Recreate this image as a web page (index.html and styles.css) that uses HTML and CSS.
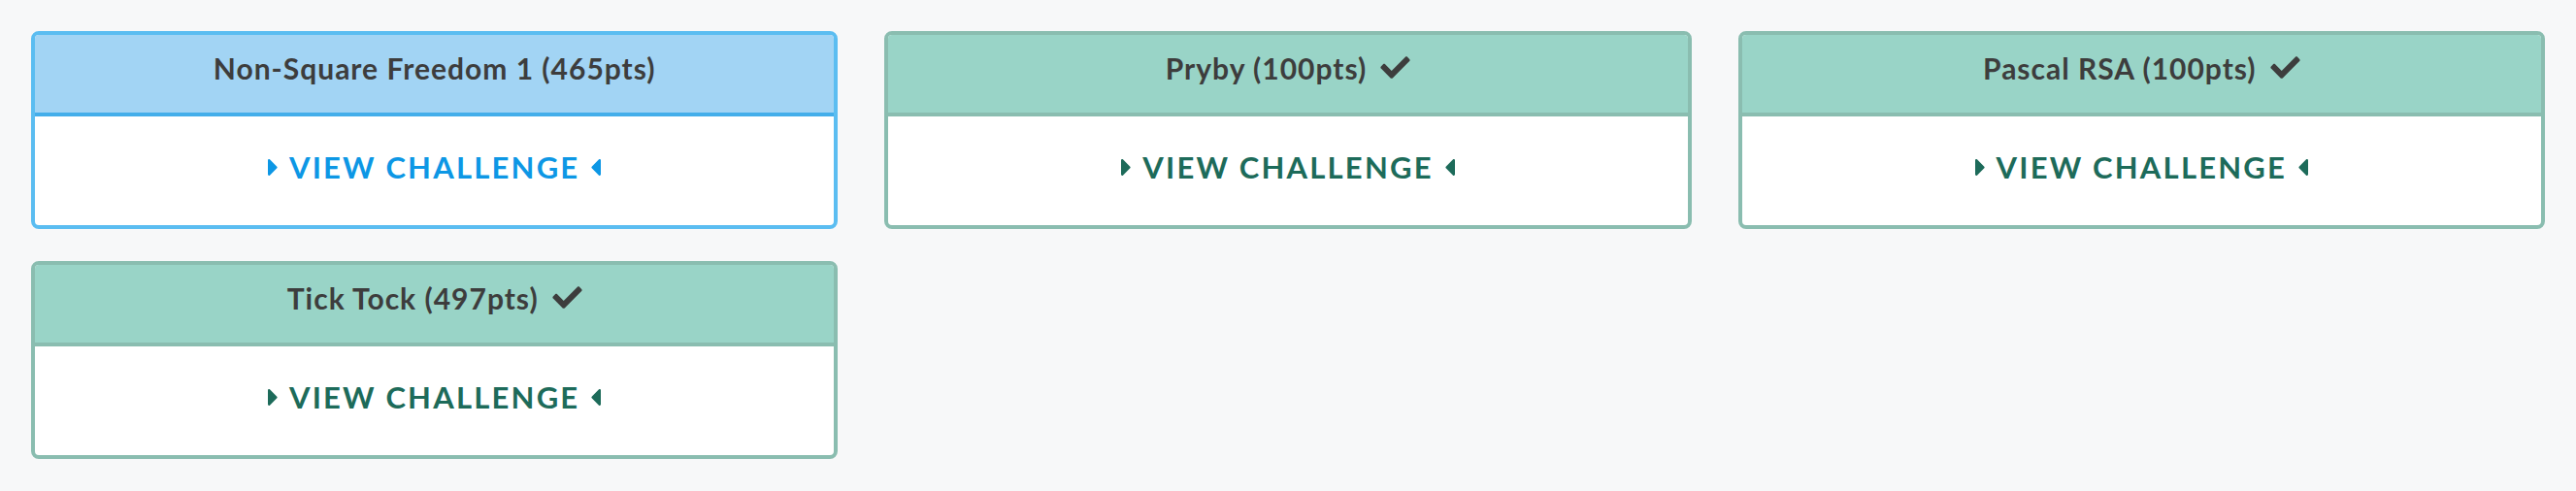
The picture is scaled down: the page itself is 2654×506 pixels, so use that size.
FILE: index.html
```html
<!DOCTYPE html>
<html lang="en">
<head>
<meta charset="utf-8">
<title>Challenges</title>
<link rel="stylesheet" href="styles.css">
</head>
<body>
<div class="grid">
  <div class="card card-open">
    <div class="card-header">Non-Square Freedom 1 (465pts)</div>
    <div class="card-body">
      <a class="view-link" href="#">
        <svg class="caret" viewBox="0 100 192 312"><path d="M0 384.662V127.338c0-17.818 21.543-26.741 34.142-14.142l128.662 128.662c7.81 7.81 7.81 20.474 0 28.284L34.142 398.804C21.543 411.404 0 402.480 0 384.662z"/></svg>
        <span>VIEW CHALLENGE</span>
        <svg class="caret" viewBox="0 100 192 312"><path d="M192 127.338v257.324c0 17.818-21.543 26.741-34.142 14.142L29.196 270.142c-7.81-7.81-7.81-20.474 0-28.284l128.662-128.662c12.599-12.6 34.142-3.676 34.142 14.142z"/></svg>
      </a>
    </div>
  </div>
  <div class="card card-solved">
    <div class="card-header">Pryby (100pts)
      <svg class="check" viewBox="0 60 512 390"><path d="M173.898 439.404l-166.4-166.4c-9.997-9.997-9.997-26.206 0-36.204l36.203-36.204c9.997-9.998 26.207-9.998 36.204 0L192 312.69 432.095 72.596c9.997-9.997 26.207-9.997 36.204 0l36.203 36.204c9.997 9.997 9.997 26.206 0 36.204l-294.4 294.401c-9.998 9.997-26.207 9.997-36.204-.001z"/></svg>
    </div>
    <div class="card-body">
      <a class="view-link" href="#">
        <svg class="caret" viewBox="0 100 192 312"><path d="M0 384.662V127.338c0-17.818 21.543-26.741 34.142-14.142l128.662 128.662c7.81 7.81 7.81 20.474 0 28.284L34.142 398.804C21.543 411.404 0 402.480 0 384.662z"/></svg>
        <span>VIEW CHALLENGE</span>
        <svg class="caret" viewBox="0 100 192 312"><path d="M192 127.338v257.324c0 17.818-21.543 26.741-34.142 14.142L29.196 270.142c-7.81-7.81-7.81-20.474 0-28.284l128.662-128.662c12.599-12.6 34.142-3.676 34.142 14.142z"/></svg>
      </a>
    </div>
  </div>
  <div class="card card-solved">
    <div class="card-header">Pascal RSA (100pts)
      <svg class="check" viewBox="0 60 512 390"><path d="M173.898 439.404l-166.4-166.4c-9.997-9.997-9.997-26.206 0-36.204l36.203-36.204c9.997-9.998 26.207-9.998 36.204 0L192 312.69 432.095 72.596c9.997-9.997 26.207-9.997 36.204 0l36.203 36.204c9.997 9.997 9.997 26.206 0 36.204l-294.4 294.401c-9.998 9.997-26.207 9.997-36.204-.001z"/></svg>
    </div>
    <div class="card-body">
      <a class="view-link" href="#">
        <svg class="caret" viewBox="0 100 192 312"><path d="M0 384.662V127.338c0-17.818 21.543-26.741 34.142-14.142l128.662 128.662c7.81 7.81 7.81 20.474 0 28.284L34.142 398.804C21.543 411.404 0 402.480 0 384.662z"/></svg>
        <span>VIEW CHALLENGE</span>
        <svg class="caret" viewBox="0 100 192 312"><path d="M192 127.338v257.324c0 17.818-21.543 26.741-34.142 14.142L29.196 270.142c-7.81-7.81-7.81-20.474 0-28.284l128.662-128.662c12.599-12.6 34.142-3.676 34.142 14.142z"/></svg>
      </a>
    </div>
  </div>
  <div class="card card-solved">
    <div class="card-header">Tick Tock (497pts)
      <svg class="check" viewBox="0 60 512 390"><path d="M173.898 439.404l-166.4-166.4c-9.997-9.997-9.997-26.206 0-36.204l36.203-36.204c9.997-9.998 26.207-9.998 36.204 0L192 312.69 432.095 72.596c9.997-9.997 26.207-9.997 36.204 0l36.203 36.204c9.997 9.997 9.997 26.206 0 36.204l-294.4 294.401c-9.998 9.997-26.207 9.997-36.204-.001z"/></svg>
    </div>
    <div class="card-body">
      <a class="view-link" href="#">
        <svg class="caret" viewBox="0 100 192 312"><path d="M0 384.662V127.338c0-17.818 21.543-26.741 34.142-14.142l128.662 128.662c7.81 7.81 7.81 20.474 0 28.284L34.142 398.804C21.543 411.404 0 402.480 0 384.662z"/></svg>
        <span>VIEW CHALLENGE</span>
        <svg class="caret" viewBox="0 100 192 312"><path d="M192 127.338v257.324c0 17.818-21.543 26.741-34.142 14.142L29.196 270.142c-7.81-7.81-7.81-20.474 0-28.284l128.662-128.662c12.599-12.6 34.142-3.676 34.142 14.142z"/></svg>
      </a>
    </div>
  </div>
</div>
</body>
</html>
```

FILE: styles.css
```css
html, body {
  margin: 0;
  padding: 0;
  background: #f7f8f9;
}

body {
  font-family: Lato, "Noto Sans", sans-serif;
}

.grid {
  display: grid;
  grid-template-columns: repeat(3, 1fr);
  column-gap: 48px;
  row-gap: 33px;
  padding: 32px;
}

.card {
  border: 4px solid #8abdb0;
  border-radius: 8px;
  background: #ffffff;
  overflow: hidden;
}

.card-header {
  height: 84px;
  display: flex;
  align-items: center;
  justify-content: center;
  gap: 14px;
  background: #99d4c7;
  border-bottom: 4px solid #8abdb0;
  color: #3d3d3d;
  font-size: 30px;
  font-weight: 700;
  letter-spacing: 1px;
  line-height: 1;
  padding-bottom: 12px;
  box-sizing: border-box;
}

.check {
  width: 31px;
  height: 23px;
  fill: #3d3d3d;
  margin-bottom: 2px;
}

.card-body {
  height: 112px;
  display: flex;
  align-items: center;
  justify-content: center;
  padding-bottom: 8px;
  box-sizing: border-box;
}

.view-link {
  display: flex;
  align-items: center;
  gap: 11px;
  color: #1d6b5a;
  text-decoration: none;
  font-size: 31px;
  font-weight: 700;
  letter-spacing: 2.2px;
  line-height: 1;
}

.caret {
  width: 11px;
  height: 19px;
  fill: currentColor;
}

.card-open {
  border-color: #5bbdf1;
}

.card-open .card-header {
  background: #a2d4f4;
  border-bottom-color: #44aeea;
}

.card-open .view-link {
  color: #0d97e5;
}
```
